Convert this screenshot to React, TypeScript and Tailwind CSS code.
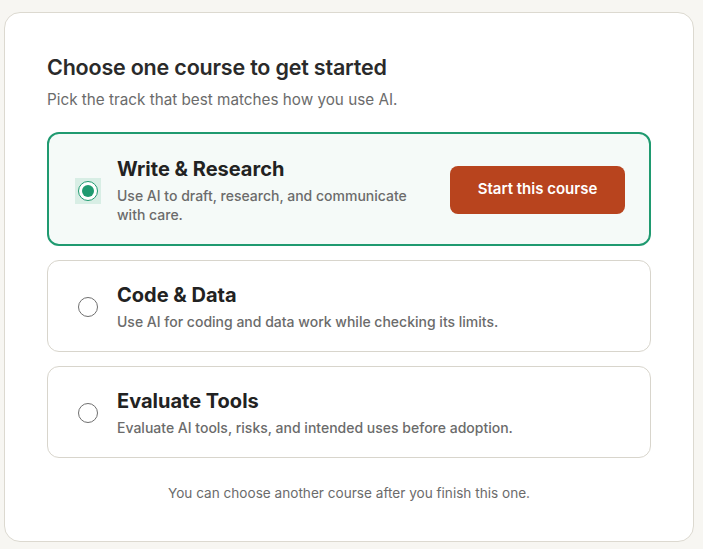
import { useState } from "react"

const courses = [
  {
    id: "write",
    title: "Write & Research",
    desc: "Use AI to draft, research, and communicate with care.",
  },
  {
    id: "code",
    title: "Code & Data",
    desc: "Use AI for coding and data work while checking its limits.",
  },
  {
    id: "eval",
    title: "Evaluate Tools",
    desc: "Evaluate AI tools, risks, and intended uses before adoption.",
  },
]

function Radio({ checked }: { checked: boolean }) {
  return (
    <div
      className={
        checked
          ? "w-[26px] h-[26px] shrink-0 flex items-center justify-center bg-[#d8eee5] mt-[3px]"
          : "w-[26px] h-[26px] shrink-0 flex items-center justify-center mt-[1px]"
      }
    >
      {checked ? (
        <div className="w-[20px] h-[20px] rounded-full border-[1.5px] border-[#1f9a70] bg-white flex items-center justify-center">
          <div className="w-[12px] h-[12px] rounded-full bg-[#1f9a70]" />
        </div>
      ) : (
        <div className="w-[20px] h-[20px] rounded-full border-[1.5px] border-[#6f6f6f] bg-white" />
      )}
    </div>
  )
}

export default function App() {
  const [selected, setSelected] = useState("write")

  return (
    <div className="min-h-screen bg-[#f7f6f2] pl-[4px] pt-[12px] font-['Inter',sans-serif]">
      <div className="w-[690px] rounded-[16px] border border-[#dcd9d0] bg-white px-[42px] pt-[40px] pb-[38px]">
        <h1 className="text-[21.5px] leading-[28px] font-semibold text-[#2a2a2a] tracking-[-0.2px]">
          Choose one course to get started
        </h1>
        <p className="mt-[8px] text-[15.25px] leading-[22px] text-[#6b6b6b]">
          Pick the track that best matches how you use AI.
        </p>

        <div className="mt-[21px] flex flex-col gap-[14px]">
          {courses.map((c) => {
            const on = c.id === selected
            return (
              <div
                key={c.id}
                onClick={() => setSelected(c.id)}
                className={
                  on
                    ? "flex items-center rounded-[12px] border-2 border-[#1f9a70] bg-[#f5faf8] pl-[26px] pr-[24px] pt-[21px] pb-[20px] cursor-pointer"
                    : "flex items-center rounded-[12px] border border-[#d8d5cc] bg-white pl-[27px] pr-[25px] py-[20px] cursor-pointer"
                }
              >
                <Radio checked={on} />
                <div className="ml-[16px] flex-1 min-w-0">
                  <div className="text-[20px] leading-[26px] font-bold text-[#222222] mt-[1px] mb-[-1px]">
                    {c.title}
                  </div>
                  <div className={on ? "mt-[5px] text-[14px] leading-[19px] font-medium text-[#6b6b6b] max-w-[310px]" : "mt-[5px] text-[14px] leading-[19px] font-medium text-[#6b6b6b]"}>
                    {c.desc}
                  </div>
                </div>
                {on && (
                  <button className="ml-[20px] h-[48px] w-[175px] rounded-[8px] bg-[#b8441e] text-white text-[15px] font-semibold">
                    Start this course
                  </button>
                )}
              </div>
            )
          })}
        </div>

        <p className="mt-[25px] text-center text-[13.6px] leading-[20px] text-[#6b6b6b]">
          You can choose another course after you finish this one.
        </p>
      </div>
    </div>
  )
}
